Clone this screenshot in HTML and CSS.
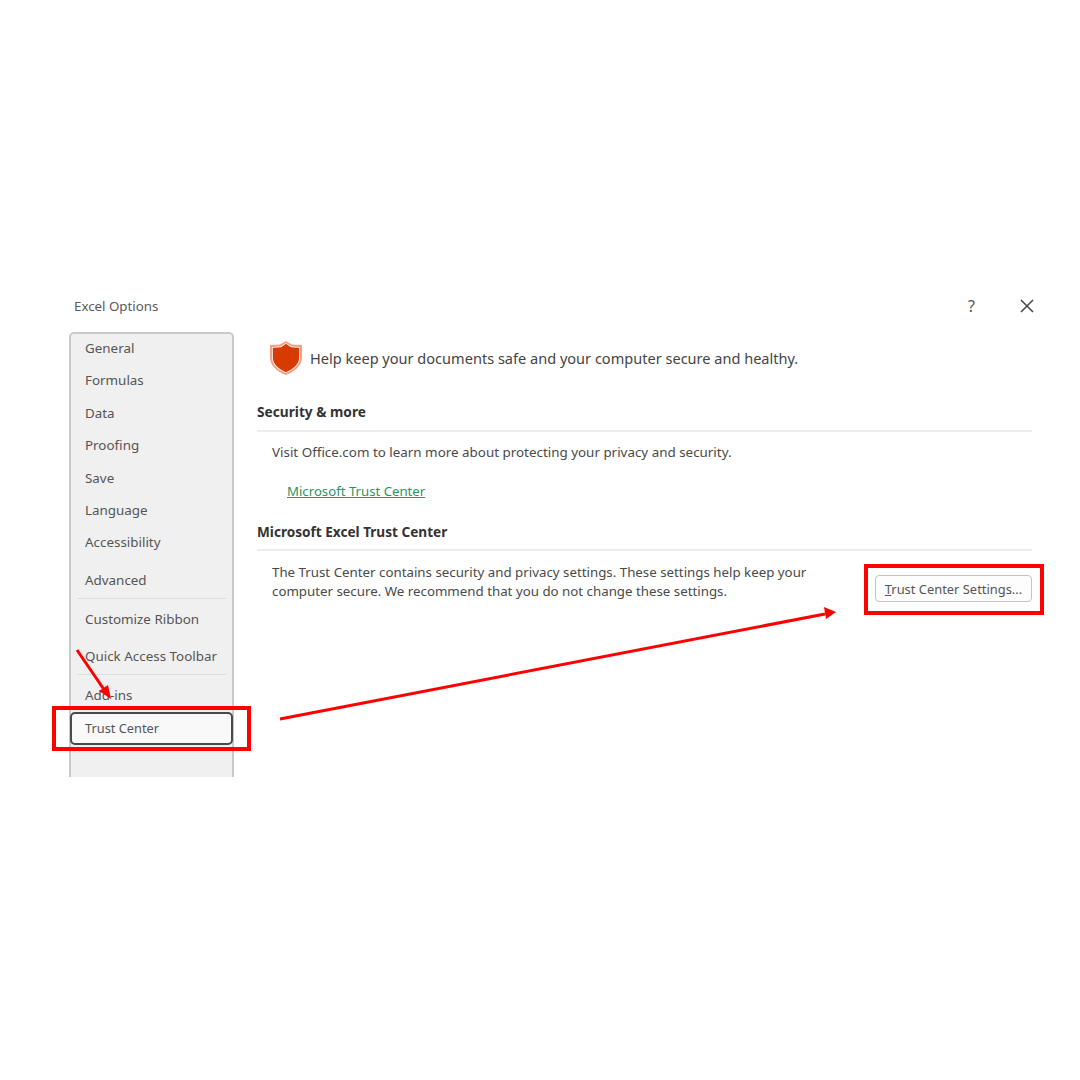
FILE: index.html
```html
<!DOCTYPE html>
<html lang="en">
<head>
  <meta charset="UTF-8" />
  <title>Excel Options</title>
  <link rel="stylesheet" href="styles.css">
</head>
<body>
  <div class="dialog">
    <div class="titlebar">
      <span class="title">Excel Options</span>
      <div class="window-buttons">
        <span class="help">?</span>
        <svg class="close" width="14" height="14" viewBox="0 0 14 14"><path d="M1 1L13 13M13 1L1 13" stroke="#444" stroke-width="1.5" fill="none"/></svg>
      </div>
    </div>

    <div class="body">
      <!-- Left nav -->
      <nav class="sidebar">
        <div class="item">General</div>
        <div class="item">Formulas</div>
        <div class="item">Data</div>
        <div class="item">Proofing</div>
        <div class="item">Save</div>
        <div class="item">Language</div>
        <div class="item">Accessibility</div>
        <div class="item item-tall">Advanced</div>
        <div class="divider"></div>
        <div class="item item-group">Customize Ribbon</div>
        <div class="item item-tall">Quick Access Toolbar</div>
        <div class="divider"></div>
        <div class="item item-addins">Add-ins</div>
        <div class="item active">Trust Center</div>
      </nav>

      <!-- Trust center page -->
      <main class="content">
        <div class="banner">
          <svg class="shield" width="34" height="36" viewBox="0 0 34 36">
            <path d="M17 1L23 4.5L33 5V17C33 25 27 31 17 35C7 31 1 25 1 17V5L11 4.5Z" fill="#f0a184"/>
            <path d="M17 3L22.500 6.500L31 7V17C31 24 26 29.500 17 33C8 29.500 3 24 3 17V7L11.500 6.500Z" fill="#fff"/>
            <path d="M17 3.800L22 7.300L30.200 7.800V17C30.200 23.500 25.500 28.800 17 32.200C8.500 28.800 3.800 23.500 3.800 17V7.800L12 7.300Z" fill="#d83b01"/>
          </svg>
          <span>Help keep your documents safe and your computer secure and healthy.</span>
        </div>

        <h2 class="section-title">Security &amp; more</h2>
        <p class="text">Visit Office.com to learn more about protecting your privacy and security.</p>
        <a class="link" href="#">Microsoft Trust Center</a>

        <h2 class="section-title section-excel">Microsoft Excel Trust Center</h2>
        <div class="trust-row">
          <p class="text">The Trust Center contains security and privacy settings. These settings help keep your computer secure. We recommend that you do not change these settings.</p>
          <button class="settings-btn"><u>T</u>rust Center Settings...</button>
        </div>
      </main>
    </div>
  </div>

  <!-- Red annotations drawn over the screenshot -->
  <div class="mark mark-nav"></div>
  <div class="mark mark-btn"></div>
  <svg class="arrows" width="1080" height="1080" viewBox="0 0 1080 1080">
    <path d="M77 650L105 691" stroke="#f00" stroke-width="3" fill="none"/>
    <path d="M111 699L99 691L108 685Z" fill="#f00"/>
    <path d="M280 719L825 614" stroke="#f00" stroke-width="3" fill="none"/>
    <path d="M836 612L824 607L826 619Z" fill="#f00"/>
  </svg>
</body>
</html>
```

FILE: styles.css
```css
* {
  margin: 0;
  padding: 0;
  box-sizing: border-box;
  font-family: "Noto Sans", "Open Sans", sans-serif;
}

body {
  width: 1080px;
  height: 1080px;
  background: #fff;
  color: #444;
  overflow: hidden;
  position: relative;
}

.dialog {
  margin-top: 294px;
  padding-left: 69px;
  padding-right: 48px;
}

.titlebar {
  display: flex;
  justify-content: space-between;
  align-items: center;
  height: 23px;
  margin-bottom: 15px;
  padding-left: 5px;
}

.title {
  font-size: 13.3px;
  color: #5a5a5a;
}

.window-buttons {
  display: flex;
  align-items: center;
  gap: 45px;
  margin-right: -2px;
}

.help {
  font-size: 16px;
  color: #555;
}

.body {
  display: flex;
  gap: 23px;
}

.sidebar {
  width: 165px;
  height: 445px;
  flex-shrink: 0;
  background: #f0f0f0;
  border: 2px solid #cacaca;
  border-bottom: none;
  border-radius: 5px 5px 0 0;
}

.item {
  height: 32.4px;
  line-height: 29px;
  padding-left: 14px;
  font-size: 13.4px;
  color: #555;
}

.item-tall {
  height: 35px;
  line-height: 35px;
  margin-top: 2px;
}

.item-group {
  margin-top: 6px;
}

.item-addins {
  height: 30.4px;
  margin-top: 6px;
}

.divider {
  height: 1px;
  margin: 0 6px;
  background: #dedede;
}

.item.active {
  height: 33px;
  margin: 0 -1px;
  padding-left: 13px;
  font-size: 12.8px;
  background: #f9f9f9;
  border: 2px solid #4a4a4a;
  border-radius: 5px;
}

.content {
  flex: 1;
}

.banner {
  display: flex;
  align-items: center;
  gap: 7px;
  height: 36px;
  margin-top: 8px;
  padding-left: 12px;
  font-size: 14.55px;
  color: #444;
}

.section-title {
  font-size: 13.7px;
  font-weight: 700;
  color: #333;
  border-bottom: 2px solid #ececec;
  height: 32px;
  line-height: 24px;
  margin-top: 24px;
}

.section-excel {
  height: 31px;
  margin-top: 19px;
  font-size: 13.6px;
}

.text {
  font-size: 13.4px;
  line-height: 19px;
  color: #4a4a4a;
  padding-left: 15px;
  padding-top: 11px;
}

.link {
  display: inline-block;
  margin-top: 20px;
  margin-left: 30px;
  font-size: 13.2px;
  color: #2e9463;
  text-decoration: underline;
}

.trust-row {
  display: flex;
  justify-content: space-between;
  align-items: flex-start;
}

.trust-row .text {
  width: 560px;
  padding-top: 12px;
  font-size: 13.3px;
}

.settings-btn {
  width: 157px;
  height: 27px;
  margin-top: 24px;
  font-size: 12.9px;
  color: #555;
  background: #fdfdfd;
  border: 1px solid #c4c4c4;
  border-radius: 4px;
}

.mark {
  position: absolute;
  border: 4px solid #f00;
}

.mark-nav {
  left: 52px;
  top: 706px;
  width: 199px;
  height: 45px;
}

.mark-btn {
  left: 864px;
  top: 564px;
  width: 180px;
  height: 51px;
}

.arrows {
  position: absolute;
  left: 0;
  top: 0;
  pointer-events: none;
}
```
